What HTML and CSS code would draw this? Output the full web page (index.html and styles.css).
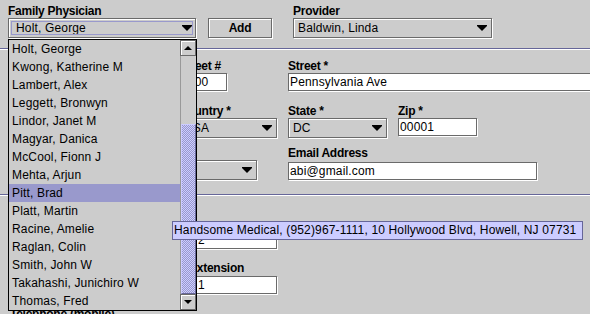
FILE: index.html
```html
<!DOCTYPE html>
<html>
<head>
<meta charset="utf-8">
<title>Patient</title>
<link rel="stylesheet" href="styles.css">
</head>
<body>
<div class="panel">
  <div class="top">
    <div class="grp fam">
      <span class="lbl">Family Physician</span>
      <div class="combo focus"><span class="val">Holt, George</span><svg class="arr" width="10" height="6" viewBox="0 0 10 6"><path d="M0 0h10v1L5 6 0 1z"/></svg></div>
    </div>
    <div class="btn add">Add</div>
    <div class="grp prov">
      <span class="lbl">Provider</span>
      <div class="combo"><span class="val">Baldwin, Linda</span><svg class="arr" width="10" height="6" viewBox="0 0 10 6"><path d="M0 0h10v1L5 6 0 1z"/></svg></div>
    </div>
  </div>

  <div class="sep"></div>

  <div class="row r-street">
    <div class="grp"></div>
    <div class="grp"><span class="lbl">Street #</span><div class="field w-num">1600</div></div>
    <div class="grp span-end"><span class="lbl">Street *</span><div class="field w-street">Pennsylvania Ave</div></div>
  </div>

  <div class="row r-country">
    <div class="grp"></div>
    <div class="grp"><span class="lbl">Country *</span><div class="combo"><span class="val">USA</span><svg class="arr" width="10" height="6" viewBox="0 0 10 6"><path d="M0 0h10v1L5 6 0 1z"/></svg></div></div>
    <div class="grp"><span class="lbl">State *</span><div class="combo"><span class="val">DC</span><svg class="arr" width="10" height="6" viewBox="0 0 10 6"><path d="M0 0h10v1L5 6 0 1z"/></svg></div></div>
    <div class="grp"><span class="lbl">Zip *</span><div class="field">00001</div></div>
  </div>

  <div class="row r-email">
    <div class="grp"></div>
    <div class="grp"><span class="lbl"></span><div class="combo w-type"><span class="val"></span><svg class="arr" width="10" height="6" viewBox="0 0 10 6"><path d="M0 0h10v1L5 6 0 1z"/></svg></div></div>
    <div class="grp span-end"><span class="lbl">Email Address</span><div class="field w-email down2">abi@gmail.com</div></div>
  </div>

  <div class="sep sep2"></div>

  <div class="row2 r-phone">
    <div class="grp"></div>
    <div class="grp"><span class="lbl"></span><div class="field inset">2</div></div>
  </div>

  <div class="row2 r-ext">
    <div class="grp"></div>
    <div class="grp"><span class="lbl">Extension</span><div class="field inset">1</div></div>
  </div>

  <div class="row2 r-mobile">
    <div class="grp"><span class="lbl mob">Telephone (mobile)</span></div>
  </div>

  <div class="popup">
    <ul class="list">
      <li>Holt, George</li>
      <li>Kwong, Katherine M</li>
      <li>Lambert, Alex</li>
      <li>Leggett, Bronwyn</li>
      <li>Lindor, Janet M</li>
      <li>Magyar, Danica</li>
      <li>McCool, Fionn J</li>
      <li>Mehta, Arjun</li>
      <li class="sel">Pitt, Brad</li>
      <li>Platt, Martin</li>
      <li>Racine, Amelie</li>
      <li>Raglan, Colin</li>
      <li>Smith, John W</li>
      <li>Takahashi, Junichiro W</li>
      <li>Thomas, Fred</li>
    </ul>
    <div class="sbar">
      <div class="sbtn"><svg width="8" height="4" viewBox="0 0 8 4"><path d="M4 0L8 4H0z"/></svg></div>
      <div class="track"><div class="thumb"></div></div>
      <div class="sbtn"><svg width="8" height="4" viewBox="0 0 8 4"><path d="M0 0h8L4 4z"/></svg></div>
    </div>
  </div>

  <div class="tip">Handsome Medical, (952)967-1111, 10 Hollywood Blvd, Howell, NJ 07731</div>
</div>
</body>
</html>
```

FILE: styles.css
```css
* { box-sizing: border-box; }
html, body { margin: 0; padding: 0; }
body {
  background: #cccccc;
  font-family: "Liberation Sans", Arial, sans-serif;
  font-size: 12px;
  letter-spacing: 0.16px;
  color: #000;
  width: 590px;
  height: 314px;
  overflow: hidden;
}
.panel { position: relative; width: 590px; height: 314px; overflow: hidden; }

.lbl {
  display: block;
  height: 14px;
  line-height: 14px;
  font-weight: bold;
  letter-spacing: -0.25px;
  white-space: nowrap;
}
.lbl.mob { padding-left: 2px; }
.grp { display: flex; flex-direction: column; }

.top { display: flex; align-items: flex-end; padding: 4px 0 0 8px; }
.fam { width: 188px; }
.prov { width: 199px; margin-left: 21px; }

.combo {
  height: 20px;
  border: 1px solid #6a6a6a;
  box-shadow: 1px 1px 0 #fff, inset 1px 1px 0 #fff;
  display: flex;
  align-items: center;
  justify-content: space-between;
  padding: 0 4px 0 4px;
  line-height: 18px;
  white-space: nowrap;
  overflow: hidden;
}
.combo.focus { outline: 1px solid #9999cc; outline-offset: -4px; padding: 0 3px 0 7px; }
.arr { flex: none; fill: #000; }

.btn {
  height: 20px;
  border: 1px solid #6a6a6a;
  box-shadow: 1px 1px 0 #fff, inset 1px 1px 0 #fff;
  font-weight: bold;
  display: flex;
  align-items: center;
  justify-content: center;
  letter-spacing: -0.25px;
}
.add { width: 64px; margin-left: 12px; }

.field {
  height: 18px;
  background: #fff;
  border: 1px solid #6a6a6a;
  box-shadow: 1px 1px 0 #fff;
  padding: 0 2px 0 1px;
  line-height: 16px;
  white-space: nowrap;
  overflow: hidden;
}

.sep { height: 2px; border-top: 1px solid #666699; border-bottom: 1px solid #fff; margin-top: 10px; }
.sep2 { margin-top: 14px; }

.row {
  display: grid;
  grid-template-columns: 160px 98px 99px 79px;
  column-gap: 11px;
  padding-left: 8px;
}
.span-end { grid-column: 3 / span 3; }
.r-street { margin-top: 9px; }
.r-country { margin-top: 13px; }
.r-email { margin-top: 8px; }
.w-num { width: 48px; }
.w-street { width: 330px; }
.w-type { width: 78px; }
.w-email { width: 249px; }
.down2 { margin-top: 2px; }

.row2 {
  display: grid;
  grid-template-columns: 170px 88px;
  column-gap: 11px;
  padding-left: 8px;
}
.row2 .field { margin-top: 1px; }
.row2 .field.inset { margin-left: 7px; }
.r-phone { margin-top: 20px; }
.r-ext { margin-top: 12px; }
.r-mobile { margin-top: 13px; }

.popup {
  position: absolute;
  left: 8px;
  top: 39px;
  width: 189px;
  height: 272px;
  border: 1px solid #000;
  background: #cccccc;
  display: flex;
}
.list { list-style: none; margin: 0; padding: 0; width: 171px; }
.list li { height: 18px; line-height: 18px; padding-left: 3px; white-space: nowrap; }
.list li.sel { background: #9999cc; }

.sbar { width: 16px; display: flex; flex-direction: column; }
.sbtn {
  height: 16px;
  flex: none;
  background: #cccccc;
  border: 1px solid #6a6a6a;
  box-shadow: inset 1px 1px 0 #fff;
  display: flex;
  align-items: center;
  justify-content: center;
}
.sbtn svg { fill: #000; }
.track {
  flex: 1;
  background: #cccccc;
  border-left: 1px solid #999;
  display: flex;
  flex-direction: column;
  justify-content: flex-end;
}
.thumb {
  height: 170px;
  border: 1px solid #666699;
  border-left-color: #ccccff;
  border-top-color: #ccccff;
  background-color: #9999cc;
  background-image: repeating-conic-gradient(#ccccff 0 25%, #9999cc 0 50%);
  background-size: 2px 2px;
}

.tip {
  position: absolute;
  left: 172px;
  top: 221px;
  width: 411px;
  height: 19px;
  background: #ccccff;
  border: 1px solid #666699;
  padding-left: 1px;
  line-height: 17px;
  white-space: nowrap;
}
```
